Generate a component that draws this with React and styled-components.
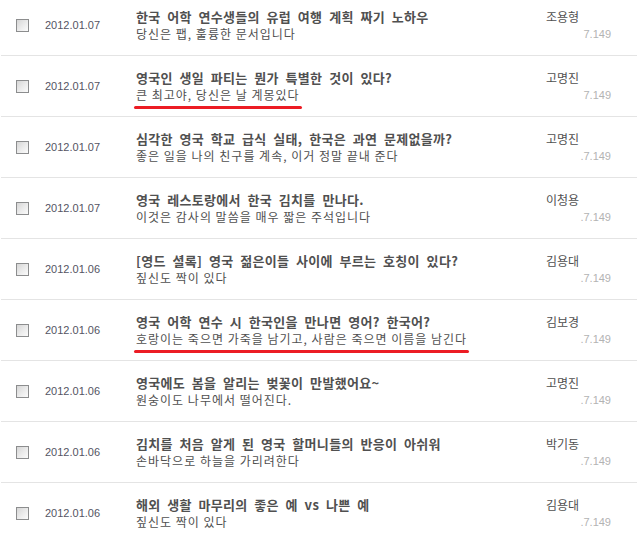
import React from "react";
import styled, { createGlobalStyle } from "styled-components";

const GlobalStyle = createGlobalStyle`
  html, body {
    margin: 0;
    padding: 0;
    background: #ffffff;
    overflow: hidden;
  }
  body {
    font-family: "Noto Sans CJK KR", "Noto Sans", sans-serif;
  }
`;

const Page = styled.div`
  width: 637px;
  height: 533px;
  overflow: hidden;
  background: #fff;
`;

const List = styled.ul`
  list-style: none;
  margin: -5px 0 0 1px;
  padding: 0;
`;

const Row = styled.li`
  display: grid;
  grid-template-columns: 29px 91px 410px 65px;
  align-items: center;
  height: 60px;
  padding-left: 15px;
  border-bottom: 1px solid #e4e4e4;
`;

const CheckBox = styled.span`
  display: block;
  width: 11px;
  height: 11px;
  border: 1px solid #8c8d8e;
  background: linear-gradient(135deg, #d6d6d6 0%, #ececec 55%, #fbfbfb 100%);
  margin-top: 1px;
`;

const DateText = styled.span`
  font-family: "Liberation Sans", Arial, sans-serif;
  font-size: 11px;
  color: #545463;
  line-height: 14px;
`;

const Body = styled.div`
  display: flex;
  flex-direction: column;
  align-items: flex-start;
  padding-top: 1px;
`;

const Title = styled.a`
  font-size: 13px;
  font-weight: 700;
  line-height: 17px;
  color: #505050;
  letter-spacing: 0.3px;
  word-spacing: 3.5px;
  text-decoration: none;
  white-space: nowrap;
`;

const Summary = styled.span`
  position: relative;
  font-size: 12px;
  line-height: 18px;
  color: #505050;
  letter-spacing: 1px;
  white-space: nowrap;

  &::after {
    content: "";
    display: ${(p) => (p.$marked ? "block" : "none")};
    position: absolute;
    left: -2px;
    right: -2px;
    bottom: -5px;
    height: 3px;
    border-radius: 2px;
    background: #ec1c24;
  }
`;

const Meta = styled.div`
  display: flex;
  flex-direction: column;
  padding-top: 1px;
`;

const Author = styled.span`
  font-size: 12px;
  line-height: 17px;
  color: #505050;
  white-space: nowrap;
`;

const Hits = styled.span`
  font-family: "Liberation Sans", Arial, sans-serif;
  font-size: 11px;
  line-height: 18px;
  color: #b3b3b3;
  text-align: right;
`;

const posts = [
  {
    date: "2012.01.07",
    title: "한국 어학 연수생들의 유럽 여행 계획 짜기 노하우",
    summary: "당신은 팹, 훌륭한 문서입니다",
    author: "조용형",
    hits: "7.149",
  },
  {
    date: "2012.01.07",
    title: "영국인 생일 파티는 뭔가 특별한 것이 있다?",
    summary: "큰 최고야, 당신은 날 계몽있다",
    author: "고명진",
    hits: "7.149",
    marked: true,
  },
  {
    date: "2012.01.07",
    title: "심각한 영국 학교 급식 실태, 한국은 과연 문제없을까?",
    summary: "좋은 일을 나의 친구를 계속, 이거 정말 끝내 준다",
    author: "고명진",
    hits: ".7.149",
  },
  {
    date: "2012.01.07",
    title: "영국 레스토랑에서 한국 김치를 만나다.",
    summary: "이것은 감사의 말씀을 매우 짧은 주석입니다",
    author: "이청용",
    hits: ".7.149",
  },
  {
    date: "2012.01.06",
    title: "[영드 셜록] 영국 젊은이들 사이에 부르는 호칭이 있다?",
    summary: "짚신도 짝이 있다",
    author: "김용대",
    hits: ".7.149",
  },
  {
    date: "2012.01.06",
    title: "영국 어학 연수 시 한국인을 만나면 영어? 한국어?",
    summary: "호랑이는 죽으면 가죽을 남기고, 사람은 죽으면 이름을 남긴다",
    author: "김보경",
    hits: ".7.149",
    marked: true,
  },
  {
    date: "2012.01.06",
    title: "영국에도 봄을 알리는 벚꽃이 만발했어요~",
    summary: "원숭이도 나무에서 떨어진다.",
    author: "고명진",
    hits: ".7.149",
  },
  {
    date: "2012.01.06",
    title: "김치를 처음 알게 된 영국 할머니들의 반응이 아쉬워",
    summary: "손바닥으로 하늘을 가리려한다",
    author: "박기동",
    hits: ".7.149",
  },
  {
    date: "2012.01.06",
    title: "해외 생활 마무리의 좋은 예 vs 나쁜 예",
    summary: "짚신도 짝이 있다",
    author: "김용대",
    hits: ".7.149",
  },
];

export default function App() {
  return (
    <Page>
      <GlobalStyle />
      <List>
        {posts.map((p, i) => (
          <Row key={i}>
            <CheckBox />
            <DateText>{p.date}</DateText>
            <Body>
              <Title>{p.title}</Title>
              <Summary $marked={p.marked}>{p.summary}</Summary>
            </Body>
            <Meta>
              <Author>{p.author}</Author>
              <Hits>{p.hits}</Hits>
            </Meta>
          </Row>
        ))}
      </List>
    </Page>
  );
}
